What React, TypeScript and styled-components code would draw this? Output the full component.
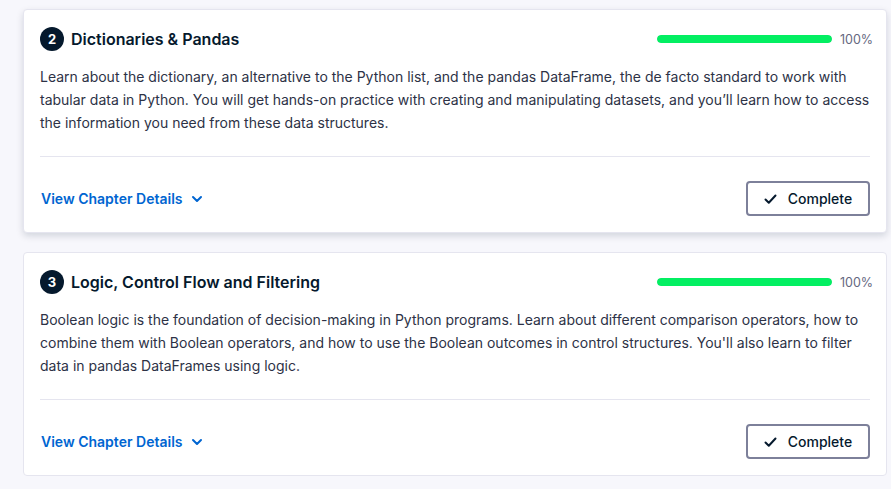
import React from "react";
import styled, { createGlobalStyle } from "styled-components";

const Global = createGlobalStyle`
  html, body { margin: 0; padding: 0; background: #f7f7fc; }
  body { font-family: Inter, "Noto Sans", "Liberation Sans", sans-serif; color: #05192d; }
  * { box-sizing: border-box; }
`;

const Page = styled.div`
  display: flex;
  flex-direction: column;
  gap: 19px;
  padding: 9px 4px 0 23px;
  width: 891px;
`;

const Card = styled.section<{ $raised?: boolean }>`
  background: #fff;
  border: 1px solid #e5e5ef;
  border-radius: 4px;
  padding: 17px 16px 16px;
  box-shadow: ${(p) => (p.$raised ? "0 3px 7px rgba(5,25,45,0.15)" : "none")};
`;

const Header = styled.div`
  display: flex;
  align-items: center;
  height: 24px;
`;

const Num = styled.span`
  width: 24px;
  height: 24px;
  border-radius: 50%;
  background: #05192d;
  color: #fff;
  font-size: 13px;
  font-weight: 700;
  display: flex;
  align-items: center;
  justify-content: center;
  flex: none;
`;

const Title = styled.h3`
  margin: 0 0 0 7px;
  font-size: 16px;
  font-weight: 600;
  color: #05192d;
  flex: 1;
`;

const Progress = styled.div`
  display: flex;
  align-items: center;
  gap: 8px;
`;

const Track = styled.div`
  width: 175px;
  height: 8px;
  border-radius: 4px;
  background: #e5e5ef;
  overflow: hidden;
`;

const Fill = styled.div`
  height: 100%;
  background: #03ef62;
  border-radius: 4px;
`;

const Pct = styled.span`
  font-size: 12.5px;
  color: #65687f;
  width: 30px;
`;

const Desc = styled.p`
  margin: 14px 0 0;
  font-size: 14px;
  line-height: 23px;
  color: #2d3246;
`;

const Divider = styled.hr`
  border: none;
  border-top: 1px solid #e5e5ef;
  margin: 22px 0 0;
`;

const Footer = styled.div`
  display: flex;
  align-items: center;
  justify-content: space-between;
  margin-top: 24px;
`;

const Details = styled.button`
  display: flex;
  align-items: center;
  gap: 9px;
  background: none;
  border: none;
  padding: 0 0 0 1px;
  font-family: inherit;
  font-size: 14px;
  font-weight: 600;
  color: #0065d1;
  cursor: pointer;
`;

const CompleteBtn = styled.button`
  display: flex;
  align-items: center;
  justify-content: center;
  gap: 11px;
  width: 124px;
  height: 35px;
  background: #fff;
  border: 2px solid #7d809a;
  border-radius: 4px;
  font-family: inherit;
  font-size: 14px;
  font-weight: 500;
  color: #05192d;
  cursor: pointer;
`;

const Chevron = () => (
  <svg width="12" height="12" viewBox="0 0 12 12" fill="none">
    <path d="M2 4l4 4 4-4" stroke="#0065d1" strokeWidth="2" strokeLinecap="round" strokeLinejoin="round" />
  </svg>
);

const Check = () => (
  <svg width="13" height="12" viewBox="0 0 13 12" fill="none">
    <path d="M1.5 6.5l3.3 3.3L11.5 2.5" stroke="#05192d" strokeWidth="2" strokeLinecap="round" strokeLinejoin="round" />
  </svg>
);

const chapters = [
  {
    n: 2,
    title: "Dictionaries & Pandas",
    desc: "Learn about the dictionary, an alternative to the Python list, and the pandas DataFrame, the de facto standard to work with tabular data in Python. You will get hands-on practice with creating and manipulating datasets, and you\u2019ll learn how to access the information you need from these data structures.",
    raised: true,
  },
  {
    n: 3,
    title: "Logic, Control Flow and Filtering",
    desc: "Boolean logic is the foundation of decision-making in Python programs. Learn about different comparison operators, how to combine them with Boolean operators, and how to use the Boolean outcomes in control structures. You'll also learn to filter data in pandas DataFrames using logic.",
    raised: false,
  },
];

export default function App() {
  return (
    <>
      <Global />
      <Page>
        {chapters.map((c) => (
          <Card key={c.n} $raised={c.raised}>
            <Header>
              <Num>{c.n}</Num>
              <Title>{c.title}</Title>
              <Progress>
                <Track>
                  <Fill style={{ width: "100%" }} />
                </Track>
                <Pct>100%</Pct>
              </Progress>
            </Header>
            <Desc>{c.desc}</Desc>
            <Divider />
            <Footer>
              <Details>
                View Chapter Details <Chevron />
              </Details>
              <CompleteBtn>
                <Check /> Complete
              </CompleteBtn>
            </Footer>
          </Card>
        ))}
      </Page>
    </>
  );
}
